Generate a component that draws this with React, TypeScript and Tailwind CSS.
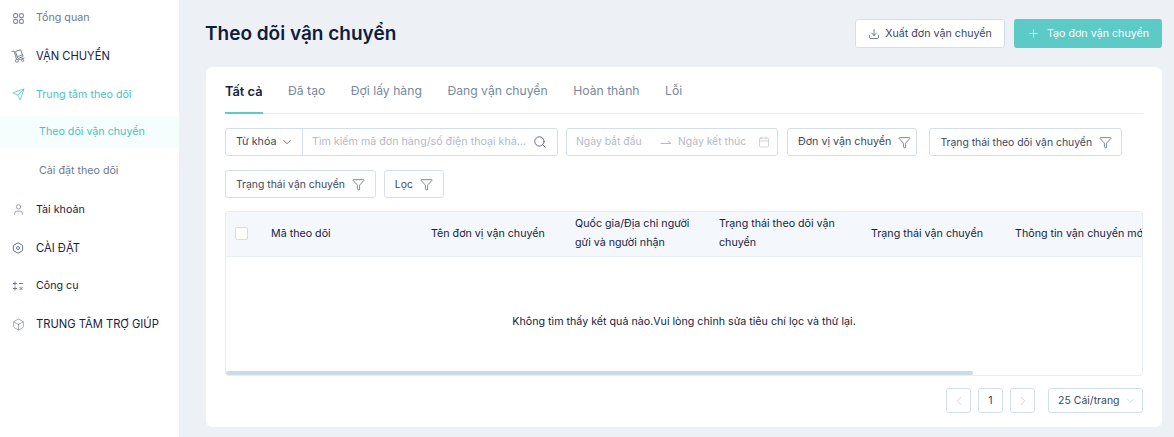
import { Box, Calendar, ChevronDown, ChevronLeft, ChevronRight, Download, Filter, Plus, Search, Send, User } from "lucide-react"

function OverviewIcon() {
  return (
    <svg width="11" height="11" viewBox="0 0 11 11" fill="none" stroke="currentColor" strokeWidth="1.1">
      <rect x="0.6" y="0.6" width="4" height="4" rx="1.7" />
      <rect x="6.4" y="0.6" width="4" height="4" rx="1.7" />
      <rect x="0.6" y="6.4" width="4" height="4" rx="1.7" />
      <rect x="6.4" y="6.4" width="4" height="4" rx="1.7" />
    </svg>
  )
}

function TruckIcon() {
  return (
    <svg width="14" height="14" viewBox="0 0 14 14" fill="none" stroke="currentColor" strokeWidth="0.9">
      <path d="M0.5 2.6 L3 2 L5.6 10.4" />
      <rect x="5.4" y="1.4" width="5.6" height="7.4" rx="0.6" transform="rotate(-20 8.2 5)" />
      <path d="M6.5 7.6 L11.2 6" />
      <path d="M7.2 11 L13.4 8.9" />
      <circle cx="5.9" cy="11.8" r="1.5" />
      <circle cx="11.6" cy="11.4" r="1.1" />
    </svg>
  )
}

function SettingIcon() {
  return (
    <svg width="12" height="12" viewBox="0 0 12 12" fill="none" stroke="currentColor" strokeWidth="1">
      <path d="M6 0.8 L10.6 3.4 V8.6 L6 11.2 L1.4 8.6 V3.4 Z" strokeLinejoin="round" />
      <circle cx="6" cy="6" r="1.5" />
    </svg>
  )
}

function ToolIcon() {
  return (
    <svg width="12" height="12" viewBox="0 0 12 12" fill="none" stroke="currentColor" strokeWidth="1">
      <path d="M1 3.5 H5 M3 1.5 V5.5" />
      <path d="M7 3.5 H11" />
      <path d="M1 8.5 H5 M3 6.5 V10.5" />
      <path d="M7.5 7 L10.5 10 M10.5 7 L7.5 10" />
    </svg>
  )
}

function RangeArrow() {
  return (
    <svg width="12" height="6" viewBox="0 0 12 6" fill="none" stroke="currentColor" strokeWidth="1">
      <path d="M0.5 4.5 H11 L8 2" />
    </svg>
  )
}

const menu = [
  { label: "Tổng quan", icon: <OverviewIcon />, text: "text-[#6b7a90] text-[10.7px]", iconColor: "text-[#7d8aa0]" },
  { label: "VẬN CHUYỂN", icon: <TruckIcon />, text: "text-[#16233f] text-[11.2px]", iconColor: "text-[#6b7a90]" },
  { label: "Trung tâm theo dõi", icon: <Send size={13} strokeWidth={1.4} />, text: "text-[#49c3bf] text-[10.7px]", iconColor: "text-[#49c3bf]" },
]

const menuBottom = [
  { label: "Tài khoản", icon: <User size={13} strokeWidth={1.2} />, size: "text-[10.7px]" },
  { label: "CÀI ĐẶT", icon: <SettingIcon />, size: "text-[11.2px]" },
  { label: "Công cụ", icon: <ToolIcon />, size: "text-[10.7px]" },
  { label: "TRUNG TÂM TRỢ GIÚP", icon: <Box size={13} strokeWidth={1.1} />, size: "text-[11.2px]" },
]

const tabs = ["Đã tạo", "Đợi lấy hàng", "Đang vận chuyển", "Hoàn thành", "Lỗi"]

function FilterButton({ label, className }: { label: string; className: string }) {
  return (
    <button className={`flex h-7 items-center gap-[7px] rounded-[3px] border border-[#d3e0ec] bg-white pl-[10px] text-[#3b4760] ${className}`}>
      <span className="whitespace-nowrap pt-px">{label}</span>
      <Filter size={13} strokeWidth={1.2} className="text-[#3b4760]" />
    </button>
  )
}

export default function App() {
  return (
    <div className="flex h-[437px] w-[1174px] overflow-hidden bg-[#edf0f5] font-['Inter',sans-serif]">
      {/* Sidebar */}
      <aside className="w-[179px] shrink-0 bg-white">
        <div className="-mt-[1px]">
          {menu.map((item) => (
            <div key={item.label} className={`flex h-[38.3px] items-center gap-[11px] pl-[11px] ${item.text}`}>
              <span className={`flex w-[14px] justify-center ${item.iconColor}`}>{item.icon}</span>
              <span>{item.label}</span>
            </div>
          ))}
          <div className="flex h-[38.3px] items-center">
            <div className="mb-[2px] flex h-8 w-full items-center bg-[#f5fdfd] pl-[39px] text-[10.7px] text-[#49c3bf]">Theo dõi vận chuyển</div>
          </div>
          <div className="flex h-[38.3px] items-center pl-[39px] text-[10.7px] text-[#6b7a90]">Cài đặt theo dõi</div>
          {menuBottom.map((item) => (
            <div key={item.label} className={`flex h-[38.3px] items-center gap-[11px] pl-[11px] text-[#16233f] ${item.size}`}>
              <span className="flex w-[14px] justify-center text-[#6b7a90]">{item.icon}</span>
              <span>{item.label}</span>
            </div>
          ))}
        </div>
      </aside>

      {/* Main */}
      <main className="min-w-0 flex-1 pl-[27px] pr-3 pt-[19px]">
        <div className="flex h-[29px] items-center justify-between">
          <h1 className="-ml-px pt-[2px] text-[19px] font-semibold text-[#0f1d3a]">Theo dõi vận chuyển</h1>
          <div className="flex gap-[9px]">
            <button className="flex h-[29px] w-[150px] items-center justify-center gap-[5px] rounded-[3px] border border-[#d3e0ec] bg-white text-[10.7px] text-[#3b4760]">
              <Download size={12} strokeWidth={1.4} />
              <span className="pt-px">Xuất đơn vận chuyển</span>
            </button>
            <button className="flex h-[29px] w-[148px] items-center justify-center gap-[7px] rounded-[3px] bg-[#5ccac6] text-[10.7px] text-white">
              <Plus size={13} strokeWidth={1.2} />
              <span className="pt-px">Tạo đơn vận chuyển</span>
            </button>
          </div>
        </div>

        <section className="mt-[19px] h-[360px] rounded-md bg-white px-[19px] pt-[11px]">
          {/* Tabs */}
          <div className="flex h-9 items-start gap-[25.5px] border-b border-[#e5ecf2] pt-[3px] text-[12.2px] text-[#7888a0]">
            <div className="relative h-[33px] pt-[1px] text-[12.8px] font-semibold text-[#16233f]">
              Tất cả
              <span className="absolute bottom-0 left-0 h-[2px] w-full bg-[#5ccac6]" />
            </div>
            {tabs.map((tab) => (
              <div key={tab} className="pt-[1px]">{tab}</div>
            ))}
          </div>

          {/* Filters */}
          <div className="mt-[14px] flex flex-wrap gap-x-2 gap-y-[14px]">
            <div className="flex h-7 w-[333px] items-center rounded-[3px] border border-[#d3e0ec] text-[10.7px]">
              <div className="flex h-full w-[77px] items-center gap-[4px] border-r border-[#d3e0ec] pl-[10px] text-[#3b4760]">
                <span className="pt-px">Từ khóa</span>
                <ChevronDown size={14} strokeWidth={1.2} />
              </div>
              <span className="ml-[9px] w-[216px] truncate text-[#b4bac4]">Tìm kiếm mã đơn hàng/số điện thoại khách hàng</span>
              <Search size={14} strokeWidth={1.3} className="ml-[5px] text-[#3b4760]" />
            </div>
            <div className="flex h-7 w-[212px] items-center rounded-[3px] border border-[#d3e0ec] pl-[9px] text-[10.4px] text-[#b4bac4]">
              <span className="w-[84px]">Ngày bắt đầu</span>
              <RangeArrow />
              <span className="ml-[6px] w-[70px] whitespace-nowrap">Ngày kết thúc</span>
              <Calendar size={12} strokeWidth={1.2} className="ml-[10px] text-[#b4bac4]" />
            </div>
            <div className="ml-px">
              <FilterButton label="Đơn vị vận chuyển" className="pr-[5px] text-[10.7px]" />
            </div>
            <div className="ml-1">
              <FilterButton label="Trạng thái theo dõi vận chuyển" className="pr-[9px] text-[10.4px]" />
            </div>
            <FilterButton label="Trạng thái vận chuyển" className="pr-[10px] text-[10.4px]" />
            <FilterButton label="Lọc" className="pr-[10px] text-[10.4px]" />
          </div>

          {/* Table */}
          <div className="relative mt-[13px] h-[165px] overflow-hidden rounded-[3px] border border-[#e8eef4] text-[10.7px] text-[#16233f]">
            <div className="grid h-[45px] grid-cols-[35px_160px_144px_144px_152px_144px_200px] items-center border-b border-[#e8eef4] bg-[#f4f7fc] pb-[2px] leading-[19px]">
              <div className="pl-[9px]">
                <div className="h-[13px] w-[13px] rounded-[2px] border border-[#d3dce8] bg-white" />
              </div>
              <div className="pl-[10px]">Mã theo dõi</div>
              <div className="pl-[10px]">Tên đơn vị vận chuyển</div>
              <div className="pl-[10px] pr-3">Quốc gia/Địa chỉ người gửi và người nhận</div>
              <div className="pl-[10px] pr-3">Trạng thái theo dõi vận chuyển</div>
              <div className="pl-[10px]">Trạng thái vận chuyển</div>
              <div className="whitespace-nowrap pl-[10px]">Thông tin vận chuyển mới nhất</div>
            </div>
            <p className="pt-[57px] text-center text-[#16233f]">Không tìm thấy kết quả nào.Vui lòng chỉnh sửa tiêu chí lọc và thử lại.</p>
            <div className="absolute bottom-0 left-0 h-1 w-[747px] rounded-full bg-[#c9daea]" />
          </div>

          {/* Pagination */}
          <div className="mt-3 flex items-center justify-end text-[10.7px] text-[#3b4760]">
            <button className="flex h-[25px] w-[25px] items-center justify-center rounded-[3px] border border-[#d3e0ec] text-[#b7c3d1]">
              <ChevronLeft size={14} strokeWidth={1.2} />
            </button>
            <button className="ml-[7px] flex h-[25px] w-[25px] items-center justify-center rounded-[3px] border border-[#d3e0ec] pt-px">1</button>
            <button className="ml-[7px] flex h-[25px] w-[25px] items-center justify-center rounded-[3px] border border-[#d3e0ec] text-[#b7c3d1]">
              <ChevronRight size={14} strokeWidth={1.2} />
            </button>
            <div className="ml-[13px] flex h-[25px] w-[95px] items-center justify-between whitespace-nowrap rounded-[3px] border border-[#d3e0ec] pl-[9px] pr-[5px] text-[10.5px]">
              <span className="pt-px">25 Cái/trang</span>
              <ChevronDown size={13} strokeWidth={1.2} className="text-[#b7c3d1]" />
            </div>
          </div>
        </section>
      </main>
    </div>
  )
}
